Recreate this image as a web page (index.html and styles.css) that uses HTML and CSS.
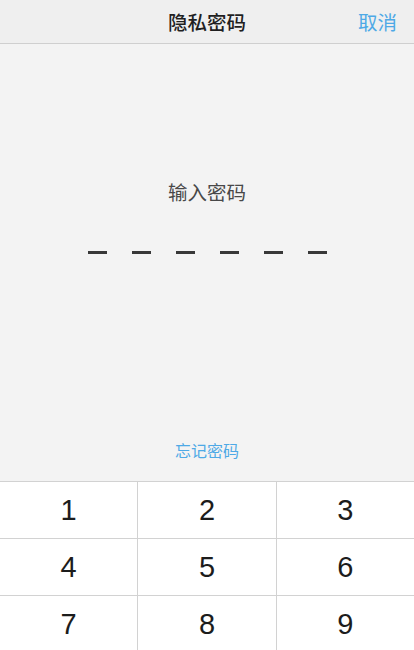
FILE: index.html
```html
<!DOCTYPE html>
<html lang="zh">
<head>
<meta charset="utf-8">
<title>隐私密码</title>
<link rel="stylesheet" href="styles.css">
</head>
<body>
<div class="app">
  <header class="nav">
    <span></span>
    <h1 class="nav-title">隐私密码</h1>
    <a class="nav-cancel">取消</a>
  </header>
  <main class="pin">
    <p class="pin-label">输入密码</p>
    <div class="pin-dashes">
      <span class="dash"></span><span class="dash"></span><span class="dash"></span>
      <span class="dash"></span><span class="dash"></span><span class="dash"></span>
    </div>
    <a class="pin-forgot">忘记密码</a>
  </main>
  <section class="keypad">
    <button class="key">1</button>
    <button class="key">2</button>
    <button class="key">3</button>
    <button class="key">4</button>
    <button class="key">5</button>
    <button class="key">6</button>
    <button class="key">7</button>
    <button class="key">8</button>
    <button class="key">9</button>
  </section>
</div>
</body>
</html>
```
FILE: styles.css
```css
html, body {
  margin: 0;
  padding: 0;
  height: 100%;
  overflow: hidden;
}
body {
  font-family: "Noto Sans CJK SC", "Noto Sans", sans-serif;
  background: #f3f3f3;
}
.app {
  display: flex;
  flex-direction: column;
  width: 414px;
}
.nav {
  height: 43px;
  border-bottom: 1px solid #cfcfcf;
  background: #efefef;
  display: grid;
  grid-template-columns: 1fr auto 1fr;
  align-items: center;
}
.nav-title {
  margin: 0;
  font-size: 19.5px;
  font-weight: 500;
  color: #1f1f1f;
  line-height: 24px;
}
.nav-cancel {
  justify-self: end;
  padding-right: 17px;
  font-size: 19.5px;
  line-height: 24px;
  color: #4ea9e6;
}
.pin {
  height: 437px;
  box-sizing: border-box;
  background: #f3f3f3;
  display: flex;
  flex-direction: column;
  align-items: center;
  padding-top: 136px;
  padding-bottom: 21px;
}
.pin-label {
  margin: 0;
  font-size: 19.5px;
  line-height: 24px;
  color: #484848;
}
.pin-dashes {
  margin-top: 47px;
  display: flex;
  gap: 25px;
}
.dash {
  width: 19px;
  height: 3px;
  background: #383838;
}
.pin-forgot {
  margin-top: auto;
  font-size: 16px;
  line-height: 20px;
  color: #4ea9e6;
}
.keypad {
  display: grid;
  grid-template-columns: repeat(3, 1fr);
  grid-auto-rows: 56px;
  gap: 1px;
  background: #d2d2d2;
  border-top: 1px solid #d2d2d2;
}
.key {
  border: 0;
  margin: 0;
  padding: 0;
  background: #fff;
  font-family: "Liberation Sans", Arial, sans-serif;
  font-size: 29px;
  color: #1c1c1c;
  display: flex;
  align-items: center;
  justify-content: center;
}
```
